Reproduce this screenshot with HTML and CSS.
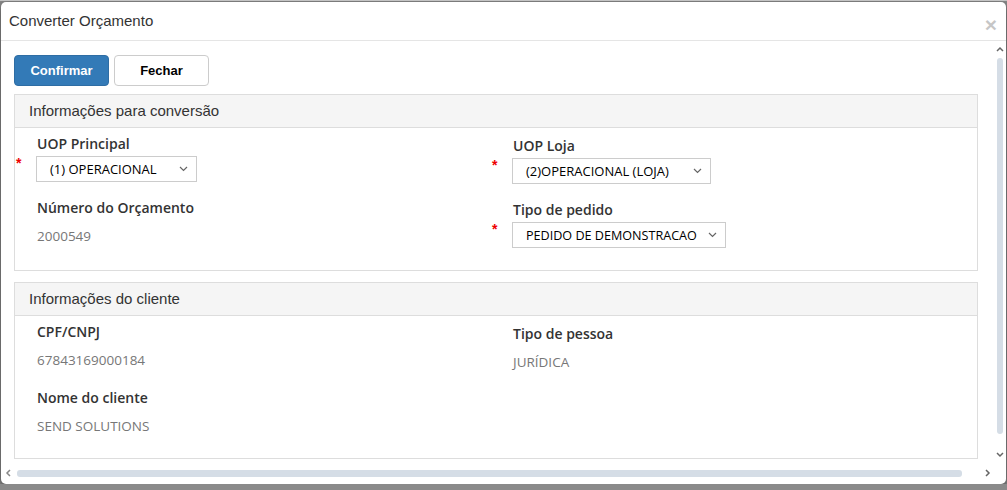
FILE: index.html
```html
<!DOCTYPE html>
<html lang="pt-BR">
<head>
    <meta charset="UTF-8">
    <meta name="viewport" content="width=device-width, initial-scale=1.0">
    <title>Converter Orçamento</title>
    <link rel="stylesheet" href="styles.css">
</head>
<body>
    <div class="modal">
        <div class="modal-header">
            <h4 class="modal-title">Converter Orçamento</h4>
            <span class="close">&times;</span>
        </div>

        <div class="modal-main">
            <div class="modal-body">
                <div class="actions">
                    <button class="btn btn-primary">Confirmar</button>
                    <button class="btn btn-default">Fechar</button>
                </div>

                <!-- Informações para conversão -->
                <div class="panel">
                    <div class="panel-heading">Informações para conversão</div>
                    <div class="panel-body">
                        <div class="col">
                            <label class="field-label">UOP Principal</label>
                            <div class="field-row">
                                <span class="required">*</span>
                                <div class="select select-uop">
                                    <span>(1) OPERACIONAL</span>
                                    <svg width="9" height="6" viewBox="0 0 9 6"><path d="M1 1l3.5 3.5L8 1" fill="none" stroke="#666" stroke-width="1.2"/></svg>
                                </div>
                            </div>
                            <label class="field-label gap">Número do Orçamento</label>
                            <p class="field-value">2000549</p>
                        </div>
                        <div class="col col-right">
                            <label class="field-label">UOP Loja</label>
                            <div class="field-row">
                                <span class="required">*</span>
                                <div class="select select-loja">
                                    <span>(2)OPERACIONAL (LOJA)</span>
                                    <svg width="9" height="6" viewBox="0 0 9 6"><path d="M1 1l3.5 3.5L8 1" fill="none" stroke="#666" stroke-width="1.2"/></svg>
                                </div>
                            </div>
                            <label class="field-label gap">Tipo de pedido</label>
                            <div class="field-row">
                                <span class="required">*</span>
                                <div class="select select-tipo">
                                    <span>PEDIDO DE DEMONSTRACAO</span>
                                    <svg width="9" height="6" viewBox="0 0 9 6"><path d="M1 1l3.5 3.5L8 1" fill="none" stroke="#666" stroke-width="1.2"/></svg>
                                </div>
                            </div>
                        </div>
                    </div>
                </div>

                <!-- Informações do cliente -->
                <div class="panel">
                    <div class="panel-heading">Informações do cliente</div>
                    <div class="panel-body">
                        <div class="col">
                            <label class="field-label">CPF/CNPJ</label>
                            <p class="field-value">67843169000184</p>
                            <label class="field-label gap-lg">Nome do cliente</label>
                            <p class="field-value">SEND SOLUTIONS</p>
                        </div>
                        <div class="col col-right">
                            <label class="field-label">Tipo de pessoa</label>
                            <p class="field-value">JURÍDICA</p>
                        </div>
                    </div>
                </div>
            </div>

            <div class="vscroll">
                <svg class="arrow" width="8" height="6" viewBox="0 0 8 6"><path d="M1 5l3-3 3 3" fill="none" stroke="#666" stroke-width="1.5"/></svg>
                <div class="vthumb"></div>
                <svg class="arrow" width="8" height="6" viewBox="0 0 8 6"><path d="M1 1l3 3 3-3" fill="none" stroke="#666" stroke-width="1.5"/></svg>
            </div>
        </div>

        <div class="hscroll">
            <svg class="arrow" width="6" height="8" viewBox="0 0 6 8"><path d="M5 1L2 4l3 3" fill="none" stroke="#888" stroke-width="1.5"/></svg>
            <div class="hthumb"></div>
            <svg class="arrow" width="6" height="8" viewBox="0 0 6 8"><path d="M1 1l3 3-3 3" fill="none" stroke="#666" stroke-width="1.5"/></svg>
        </div>
    </div>
</body>
</html>
```

FILE: styles.css
```css
body {
    margin: 0;
    padding: 0;
    background-color: #8a8a8a;
    border-top: 1px solid #c4c4c4;
    font-family: "Liberation Sans", Arial, sans-serif;
    color: #333;
}

.modal {
    margin: 1px 1px 0 1px;
    height: 482px;
    background-color: #fff;
    border-radius: 5px;
    box-shadow: 0 3px 8px rgba(0, 0, 0, 0.5);
    display: flex;
    flex-direction: column;
    overflow: hidden;
}

.modal-header {
    height: 38px;
    padding: 0 9px 0 8px;
    border-bottom: 1px solid #e5e5e5;
    display: flex;
    align-items: center;
    justify-content: space-between;
    flex-shrink: 0;
}

.modal-title {
    margin: 0;
    font-size: 15px;
    font-weight: normal;
    color: #333;
    padding-bottom: 1px;
}

.close {
    font-size: 21px;
    font-weight: bold;
    color: #000;
    opacity: 0.22;
    line-height: 1;
    margin-top: 6px;
}

.modal-main {
    flex: 1;
    display: flex;
    min-height: 0;
}

.modal-body {
    flex: 1;
    padding: 14px 16px 0 13px;
    overflow: hidden;
}

.actions {
    display: flex;
    gap: 5px;
    margin-bottom: 8px;
}

.btn {
    width: 95px;
    height: 31px;
    border-radius: 4px;
    font-family: "Liberation Sans", Arial, sans-serif;
    font-size: 13px;
    font-weight: bold;
    cursor: pointer;
}

.btn-primary {
    background-color: #337ab7;
    border: 1px solid #2e6da4;
    color: #fff;
}

.btn-default {
    background-color: #fff;
    border: 1px solid #ccc;
    color: #000;
}

.panel {
    border: 1px solid #ddd;
    margin-bottom: 11px;
    width: 962px;
}

.panel-heading {
    background-color: #f5f5f5;
    border-bottom: 1px solid #ddd;
    padding: 6px 14px 6px 14px;
    line-height: 20px;
    font-size: 15px;
    color: #333;
}

.panel-body {
    display: grid;
    grid-template-columns: 476px 1fr;
    padding: 6px 0 22px 0;
}

.col {
    padding-left: 22px;
}

.col-right {
    padding-top: 2px;
}

.field-label {
    display: block;
    font-family: "Open Sans", sans-serif;
    font-weight: 600;
    font-size: 14px;
    line-height: 20px;
    color: #333;
}

.field-label.gap {
    margin-top: 16px;
}

.field-label.gap-lg {
    margin-top: 18px;
}

.field-value {
    margin: 8px 0 0 0;
    font-family: "Open Sans", sans-serif;
    font-size: 13.5px;
    line-height: 20px;
    color: #777;
}

.field-row {
    position: relative;
    margin-top: 2px;
}

.required {
    position: absolute;
    left: -21px;
    top: -1px;
    color: #e00;
    font-size: 14px;
    font-weight: bold;
}

.select {
    height: 24px;
    border: 1px solid #ccc;
    display: flex;
    align-items: center;
    justify-content: space-between;
    padding: 0 8px 0 13px;
    font-family: "Open Sans", sans-serif;
    font-size: 13px;
    color: #000;
    margin-left: -1px;
}

.select-uop {
    width: 138px;
}

.select-loja {
    width: 176px;
}

.select-tipo {
    width: 191px;
    font-size: 12.6px;
}

.vscroll {
    width: 12px;
    display: flex;
    flex-direction: column;
    align-items: center;
    padding: 5px 0 8px 0;
    gap: 4px;
}

.vthumb {
    width: 6px;
    height: 380px;
    background-color: #d5dde6;
    border-radius: 3px;
    margin: 2px 0 14px 0;
}

.hscroll {
    height: 14px;
    display: flex;
    align-items: center;
    padding: 0 15px 4px 4px;
    gap: 6px;
    flex-shrink: 0;
}

.hthumb {
    width: 947px;
    height: 7px;
    background-color: #d5dde6;
    border-radius: 3px;
    margin-right: 17px;
}

.arrow {
    flex-shrink: 0;
}
```
